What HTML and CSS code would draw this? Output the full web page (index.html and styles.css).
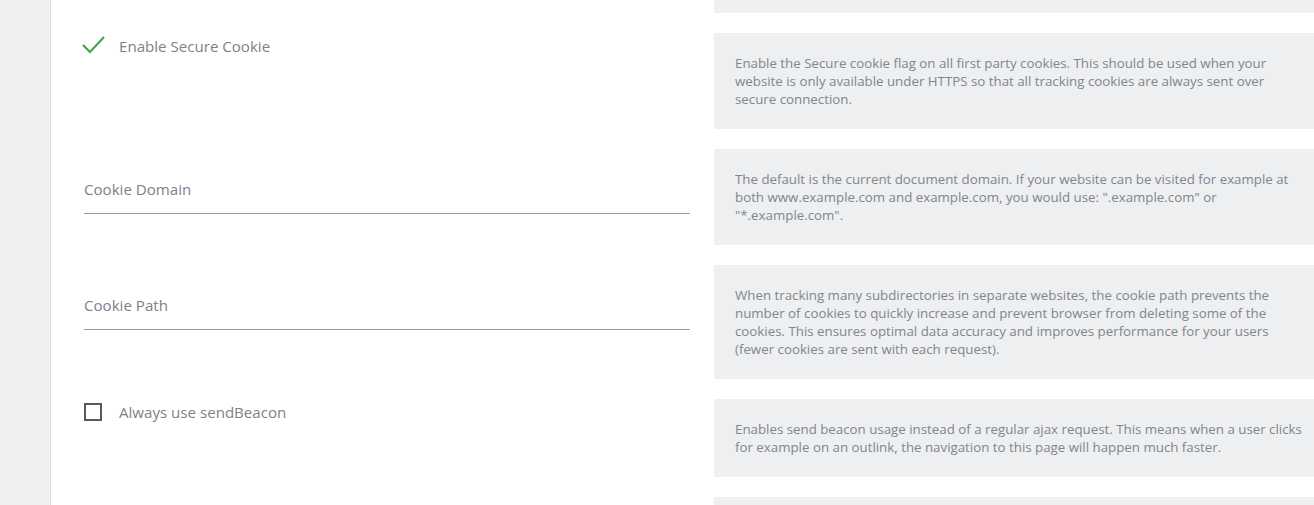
FILE: index.html
```html
<!DOCTYPE html>
<html lang="en">
<head>
  <meta charset="UTF-8" />
  <title>Tracking settings</title>
  <link rel="stylesheet" href="styles.css">
</head>
<body>
  <div class="sidebar"></div>

  <main class="settings">
    <!-- previous setting, scrolled out of view -->
    <div class="row">
      <div class="field"></div>
      <div class="help help-cut"></div>
    </div>

    <div class="row">
      <div class="field check-field">
        <span class="check checked">
          <svg width="24" height="18" viewBox="0 0 24 18"><polyline points="1,9 8,16 22,1" fill="none" stroke="#43a047" stroke-width="2"/></svg>
        </span>
        <span class="check-label">Enable Secure Cookie</span>
      </div>
      <div class="help">Enable the Secure cookie flag on all first party cookies. This should be used when your website is only available under HTTPS so that all tracking cookies are always sent over secure connection.</div>
    </div>

    <div class="row">
      <div class="field">
        <div class="input-field">Cookie Domain</div>
      </div>
      <div class="help">The default is the current document domain. If your website can be visited for example at both www.example.com and example.com, you would use: ".example.com" or "*.example.com".</div>
    </div>

    <div class="row">
      <div class="field">
        <div class="input-field">Cookie Path</div>
      </div>
      <div class="help">When tracking many subdirectories in separate websites, the cookie path prevents the number of cookies to quickly increase and prevent browser from deleting some of the cookies. This ensures optimal data accuracy and improves performance for your users (fewer cookies are sent with each request).</div>
    </div>

    <div class="row">
      <div class="field check-field">
        <span class="check"></span>
        <span class="check-label">Always use sendBeacon</span>
      </div>
      <div class="help">Enables send beacon usage instead of a regular ajax request. This means when a user clicks for example on an outlink, the navigation to this page will happen much faster.</div>
    </div>

    <div class="row">
      <div class="field"></div>
      <div class="help help-cut"></div>
    </div>
  </main>
</body>
</html>
```

FILE: styles.css
```css
* { box-sizing: border-box; }

body {
  margin: 0;
  height: 505px;
  overflow: hidden;
  display: flex;
  background: #fff;
  font-family: 'Open Sans', sans-serif;
  color: #7b828c;
}

.sidebar {
  width: 51px;
  flex-shrink: 0;
  background: #eff0f2;
  border-right: 1px solid #dcdee0;
}

.settings {
  padding-left: 33px;
}

.row {
  display: grid;
  grid-template-columns: 606px 612px;
  column-gap: 24px;
  margin-bottom: 20px;
}

.help {
  background: #eeeff0;
  border-radius: 2px;
  padding: 21px 21px;
  font-size: 13.3px;
  line-height: 18px;
  color: #80868e;
}

.help-cut {
  height: 13px;
  padding: 0;
}

.check-field {
  display: flex;
  align-items: flex-start;
  padding-top: 3px;
}

.check {
  width: 18px;
  height: 18px;
  margin-top: 1px;
  border: 2px solid #5a5a5a;
  flex-shrink: 0;
}

.check.checked {
  border: none;
  margin-top: 0;
}

.check.checked svg {
  display: block;
  margin-left: -2px;
}

.check-label {
  margin-left: 17px;
  font-size: 15.1px;
  line-height: 20px;
}

.input-field {
  padding: 30px 0 14px;
  border-bottom: 1px solid #9e9e9e;
  font-size: 15.1px;
  line-height: 20px;
}
```
